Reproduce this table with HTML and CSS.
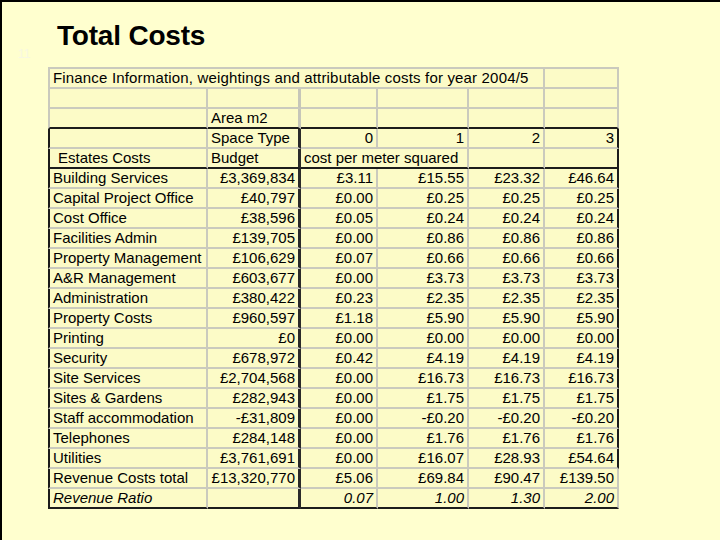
FILE: index.html
```html
<!DOCTYPE html>
<html>
<head>
<meta charset="utf-8">
<link rel="stylesheet" href="styles.css">
</head>
<body>
<div class="slide">
  <div class="header">
    <span class="slide-num">11</span>
    <h1 class="title">Total Costs</h1>
  </div>
  <table class="sheet">
    <colgroup>
      <col class="c1"><col class="c2"><col class="c3"><col class="c4"><col class="c5"><col class="c6">
    </colgroup>
    <tbody>
      <tr class="r-top">
        <td colspan="5" class="first caption">Finance Information, weightings and attributable costs for year 2004/5</td>
        <td></td>
      </tr>
      <tr>
        <td class="first"></td><td class="sep-g"></td><td></td><td></td><td></td><td></td>
      </tr>
      <tr class="b-black">
        <td class="first"></td><td class="sep-g">Area m2</td><td></td><td></td><td></td><td></td>
      </tr>
      <tr class="framed">
        <td class="first"></td><td class="sep">Space Type</td><td class="num">0</td><td class="num">1</td><td class="num">2</td><td class="num last">3</td>
      </tr>
      <tr class="framed b-black">
        <td class="first indent">Estates Costs</td><td class="sep">Budget</td><td colspan="2">cost per meter squared</td><td></td><td class="last"></td>
      </tr>
      <tr class="framed"><td class="first">Building Services</td><td class="sep num">£3,369,834</td><td class="num">£3.11</td><td class="num">£15.55</td><td class="num">£23.32</td><td class="num last">£46.64</td></tr>
      <tr class="framed"><td class="first">Capital Project Office</td><td class="sep num">£40,797</td><td class="num">£0.00</td><td class="num">£0.25</td><td class="num">£0.25</td><td class="num last">£0.25</td></tr>
      <tr class="framed"><td class="first">Cost Office</td><td class="sep num">£38,596</td><td class="num">£0.05</td><td class="num">£0.24</td><td class="num">£0.24</td><td class="num last">£0.24</td></tr>
      <tr class="framed"><td class="first">Facilities Admin</td><td class="sep num">£139,705</td><td class="num">£0.00</td><td class="num">£0.86</td><td class="num">£0.86</td><td class="num last">£0.86</td></tr>
      <tr class="framed"><td class="first">Property Management</td><td class="sep num">£106,629</td><td class="num">£0.07</td><td class="num">£0.66</td><td class="num">£0.66</td><td class="num last">£0.66</td></tr>
      <tr class="framed"><td class="first">A&amp;R Management</td><td class="sep num">£603,677</td><td class="num">£0.00</td><td class="num">£3.73</td><td class="num">£3.73</td><td class="num last">£3.73</td></tr>
      <tr class="framed"><td class="first">Administration</td><td class="sep num">£380,422</td><td class="num">£0.23</td><td class="num">£2.35</td><td class="num">£2.35</td><td class="num last">£2.35</td></tr>
      <tr class="framed"><td class="first">Property Costs</td><td class="sep num">£960,597</td><td class="num">£1.18</td><td class="num">£5.90</td><td class="num">£5.90</td><td class="num last">£5.90</td></tr>
      <tr class="framed"><td class="first">Printing</td><td class="sep num">£0</td><td class="num">£0.00</td><td class="num">£0.00</td><td class="num">£0.00</td><td class="num last">£0.00</td></tr>
      <tr class="framed"><td class="first">Security</td><td class="sep num">£678,972</td><td class="num">£0.42</td><td class="num">£4.19</td><td class="num">£4.19</td><td class="num last">£4.19</td></tr>
      <tr class="framed"><td class="first">Site Services</td><td class="sep num">£2,704,568</td><td class="num">£0.00</td><td class="num">£16.73</td><td class="num">£16.73</td><td class="num last">£16.73</td></tr>
      <tr class="framed"><td class="first">Sites &amp; Gardens</td><td class="sep num">£282,943</td><td class="num">£0.00</td><td class="num">£1.75</td><td class="num">£1.75</td><td class="num last">£1.75</td></tr>
      <tr class="framed"><td class="first">Staff accommodation</td><td class="sep num">-£31,809</td><td class="num">£0.00</td><td class="num">-£0.20</td><td class="num">-£0.20</td><td class="num last">-£0.20</td></tr>
      <tr class="framed"><td class="first">Telephones</td><td class="sep num">£284,148</td><td class="num">£0.00</td><td class="num">£1.76</td><td class="num">£1.76</td><td class="num last">£1.76</td></tr>
      <tr class="framed"><td class="first">Utilities</td><td class="sep num">£3,761,691</td><td class="num">£0.00</td><td class="num">£16.07</td><td class="num">£28.93</td><td class="num last">£54.64</td></tr>
      <tr class="framed"><td class="first">Revenue Costs total</td><td class="sep num">£13,320,770</td><td class="num">£5.06</td><td class="num">£69.84</td><td class="num">£90.47</td><td class="num">£139.50</td></tr>
      <tr class="framed b-black ratio"><td class="first">Revenue Ratio</td><td class="sep num"></td><td class="num">0.07</td><td class="num">1.00</td><td class="num">1.30</td><td class="num">2.00</td></tr>
    </tbody>
  </table>
</div>
</body>
</html>
```
FILE: styles.css
```css
html, body {
  margin: 0;
  padding: 0;
  background: #ffffcf;
}

.slide {
  width: 720px;
  height: 540px;
  box-sizing: border-box;
  border-top: 2px solid #000;
  border-left: 2px solid #000;
  background: #ffffcf;
  font-family: "Liberation Sans", Arial, sans-serif;
  color: #000;
  overflow: hidden;
}

.header {
  display: flex;
  align-items: flex-end;
  padding-left: 16px;
  padding-top: 20px;
  height: 28px;
}

.slide-num {
  width: 39px;
  font-size: 12px;
  line-height: 12px;
  color: #f7f7e2;
  margin-bottom: -10px;
}

.title {
  margin: 0;
  font-size: 28px;
  line-height: 28px;
  font-weight: bold;
  letter-spacing: -0.2px;
}

.sheet {
  margin-top: 17px;
  margin-left: 46px;
  border-collapse: separate;
  border-spacing: 0;
  table-layout: fixed;
  width: 571px;
  font-size: 15px;
}

.c1 { width: 160px; }
.c2 { width: 93px; }
.c3 { width: 77px; }
.c4 { width: 91px; }
.c5 { width: 76px; }
.c6 { width: 74px; }

.sheet td {
  height: 17px;
  line-height: 17px;
  padding: 0 3px 1px;
  background: #fcfbc7;
  border-right: 2px solid #cacabd;
  border-bottom: 2px solid #cacabd;
  white-space: nowrap;
  overflow: visible;
}

.sheet td.caption {
  letter-spacing: 0.17px;
}

.sheet tr.r-top td {
  border-top: 2px solid #cacabd;
}

.sheet td.first {
  border-left: 2px solid #cacabd;
}

.sheet td.num {
  text-align: right;
}

.sheet td.indent {
  padding-left: 8px;
}

.sheet td.sep-g {
  border-right: 3px solid #c6c6b9;
}

.sheet tr.b-black td {
  border-bottom: 2px solid #1c1c1c;
}

.sheet tr.framed td.first {
  border-left: 2px solid #1c1c1c;
}

.sheet tr.framed td.sep {
  border-right: 3px solid #2a2a2a;
}

.sheet tr.framed td.last {
  border-right: 2px solid #1c1c1c;
}

.sheet tr.ratio td {
  font-style: italic;
}
```
